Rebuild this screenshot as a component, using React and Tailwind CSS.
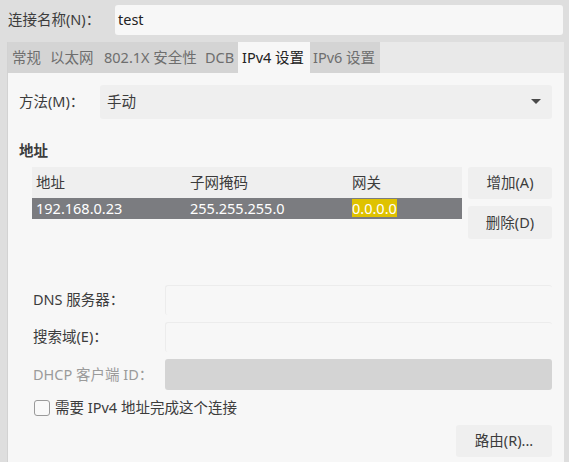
export default function App() {
  const font = { fontFamily: '"Noto Sans", "Noto Sans CJK SC", sans-serif' };
  return (
    <div className="w-[569px] h-[462px] bg-[#dedede] text-[14.5px] text-[#3c3c3c] overflow-hidden flex flex-col" style={font}>
      {/* name row */}
      <div className="flex items-center h-[42px] pt-[5px] pb-[7px]">
        <div className="w-[115px] pl-[8px]">连接名称(N)：</div>
        <div className="flex-1 mr-[6px] h-[30px] bg-[#f7f7f7] rounded-[3px] flex items-center pl-[3px] text-[#222]">test</div>
      </div>
      {/* notebook */}
      <div className="flex-1 flex ml-[7px] mr-[5px] border-l border-[#d2d2d2]">
        <div className="flex-1 flex flex-col">
          <div className="flex h-[31px] bg-[#e9e9e9] text-[#6e6e6e]">
            <div className="w-[37px] bg-[#d4d4d4] flex items-center pl-[4px]">常规</div>
            <div className="w-[55px] bg-[#d4d4d4] flex items-center pl-[5px]">以太网</div>
            <div className="w-[102px] bg-[#d4d4d4] flex items-center pl-[4px]">802.1X 安全性</div>
            <div className="w-[36px] bg-[#d4d4d4] flex items-center pl-[3px]">DCB</div>
            <div className="w-[72px] bg-[#f7f7f7] flex items-center pl-[4px] text-[#222]">IPv4 设置</div>
            <div className="w-[70px] bg-[#d4d4d4] flex items-center pl-[3px]">IPv6 设置</div>
          </div>
          <div className="flex-1 bg-[#f7f7f7] flex flex-col pl-[11px] pr-[12px] pt-[12px]">
            {/* method */}
            <div className="flex items-center h-[34px]">
              <div className="w-[81px]">方法(M)：</div>
              <div className="flex-1 h-[34px] bg-[#efefef] rounded-[3px] flex items-center justify-between pl-[7px] pr-[11px]">
                <span>手动</span>
                <svg width="10" height="6" viewBox="0 0 10 6"><path d="M0 0 L10 0 L5 5 Z" fill="#4a4a4a" /></svg>
              </div>
            </div>
            <div className="mt-[20px] h-[24px] flex items-center font-bold">地址</div>
            {/* table + buttons */}
            <div className="flex mt-[4px] pl-[13px] h-[110px]">
              <div className="w-[430px] flex flex-col">
                <div className="h-[31px] bg-[#efefef] flex items-center">
                  <div className="w-[155px] pl-[4px]">地址</div>
                  <div className="w-[161px] pl-[3px]">子网掩码</div>
                  <div className="pl-[4px]">网关</div>
                </div>
                <div className="h-[21px] bg-[#7b7c80] text-white flex items-center">
                  <div className="w-[155px] pl-[4px]">192.168.0.23</div>
                  <div className="w-[161px] pl-[3px]">255.255.255.0</div>
                  <div className="pl-[4px]"><span className="bg-[#dfc200] inline-block h-[18px] leading-[18px]">0.0.0.0</span></div>
                </div>
              </div>
              <div className="ml-[6px] flex-1 flex flex-col gap-[7px]">
                <div className="h-[32px] bg-[#efefef] rounded-[3px] flex items-center justify-center">增加(A)</div>
                <div className="h-[33px] bg-[#efefef] rounded-[3px] flex items-center justify-center">删除(D)</div>
              </div>
            </div>
            {/* fields */}
            <div className="pl-[14px] flex flex-col gap-[7px] mt-[8px]">
              <div className="flex items-center h-[30px]">
                <div className="w-[132px]">DNS 服务器：</div>
                <div className="flex-1 h-[30px] border-l border-t border-[#ececec] rounded-[3px]"></div>
              </div>
              <div className="flex items-center h-[30px]">
                <div className="w-[132px]">搜索域(E)：</div>
                <div className="flex-1 h-[30px] border-l border-t border-[#ececec] rounded-[3px]"></div>
              </div>
              <div className="flex items-center h-[31px]">
                <div className="w-[132px] text-[#9b9b9b]">DHCP 客户端 ID：</div>
                <div className="flex-1 h-[31px] bg-[#d4d4d4] rounded-[3px]"></div>
              </div>
            </div>
            <div className="flex items-center mt-[10px] pl-[15px] h-[16px]">
              <div className="w-[16px] h-[16px] border border-[#9a9a9a] rounded-[3px] bg-[#f9f9f9]"></div>
              <div className="ml-[5px]">需要 IPv4 地址完成这个连接</div>
            </div>
            <div className="flex justify-end mt-[9px]">
              <div className="w-[96px] h-[32px] bg-[#efefef] rounded-[3px] flex items-center justify-center">路由(R)...</div>
            </div>
          </div>
        </div>
      </div>
    </div>
  );
}
